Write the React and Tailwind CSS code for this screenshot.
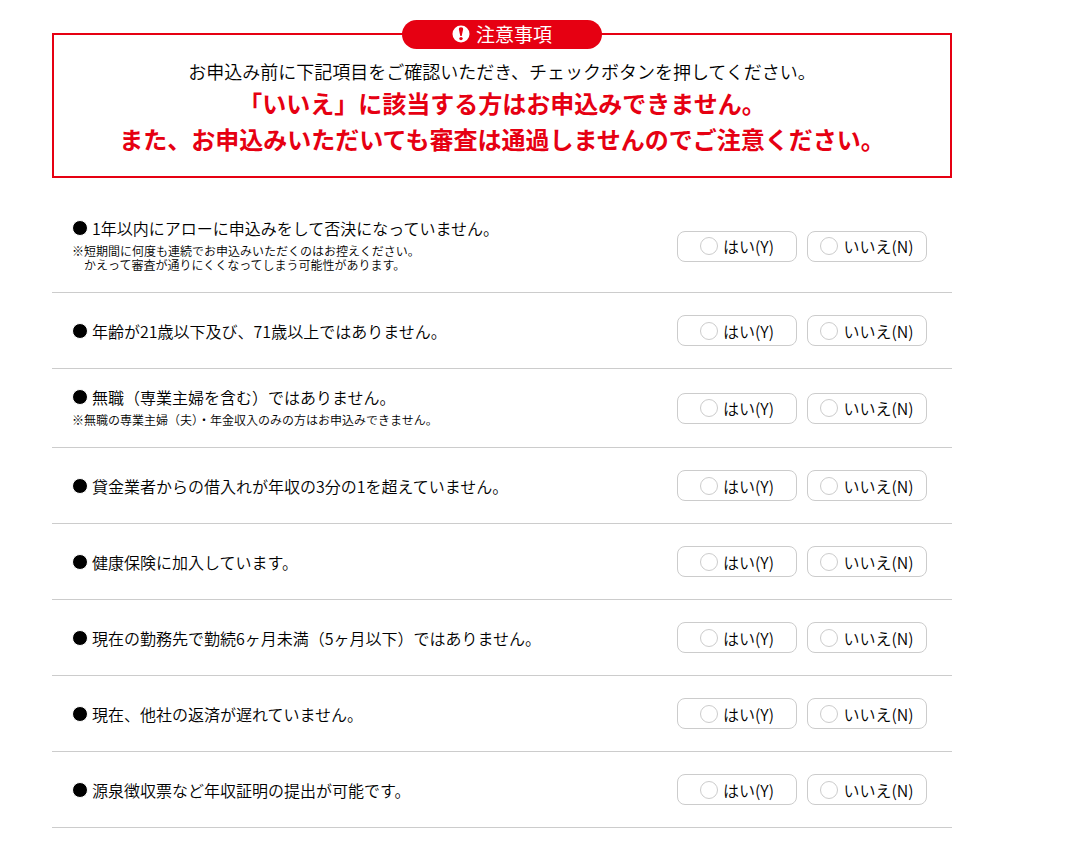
import React, { useState } from "react";

const questions = [
  {
    id: "history",
    text: "1年以内にアローに申込みをして否決になっていません。",
    note: "※短期間に何度も連続でお申込みいただくのはお控えください。\n　かえって審査が通りにくくなってしまう可能性があります。",
  },
  { id: "age", text: "年齢が21歳以下及び、71歳以上ではありません。" },
  {
    id: "job",
    text: "無職（専業主婦を含む）ではありません。",
    note: "※無職の専業主婦（夫）・年金収入のみの方はお申込みできません。",
  },
  {
    id: "loans",
    text: "貸金業者からの借入れが年収の3分の1を超えていません。",
  },
  { id: "insurance", text: "健康保険に加入しています。" },
  {
    id: "tenure",
    text: "現在の勤務先で勤続6ヶ月未満（5ヶ月以下）ではありません。",
  },
  { id: "arrears", text: "現在、他社の返済が遅れていません。" },
  { id: "income", text: "源泉徴収票など年収証明の提出が可能です。" },
];

const App = () => {
  const [answers, setAnswers] = useState({});

  const handleChange = (id, value) => {
    setAnswers((prev) => ({ ...prev, [id]: value }));
  };

  return (
    <main
      lang="ja"
      className="min-h-screen bg-white pt-5 pl-[52px] pr-5 font-['Noto_Sans_CJK_JP',sans-serif] text-base font-[350] text-black"
    >
      <div className="max-w-[900px]">
        <Notice />
        <form className="mt-[22px]">
          {questions.map((question) => (
            <Question
              key={question.id}
              question={question}
              answer={answers[question.id]}
              onChange={handleChange}
            />
          ))}
        </form>
      </div>
    </main>
  );
};

const Notice = () => (
  <section className="relative mt-[13px] border-2 border-[#e60012] px-4 pt-[23px] pb-[19px] text-center">
    {/* Title pill on the top border */}
    <h2 className="absolute inset-x-0 -top-[15px] mx-auto flex h-[29px] w-[200px] items-center justify-center gap-[6px] rounded-full bg-[#e60012] text-[19px] font-normal text-white">
      <AlertIcon />
      注意事項
    </h2>
    <p className="text-[18px] leading-[27px]">
      お申込み前に下記項目をご確認いただき、チェックボタンを押してください。
    </p>
    <p className="text-2xl leading-9 font-bold text-[#e60012]">
      「いいえ」に該当する方はお申込みできません。
      <br />
      また、お申込みいただいても審査は通過しませんのでご注意ください。
    </p>
  </section>
);

const AlertIcon = () => (
  <svg width="18" height="20" viewBox="0 0 18 20" aria-hidden="true">
    <circle cx="9" cy="9" r="8.5" fill="#fff" />
    <path
      d="M9 2.2c-1.5 0-2.3.9-2.1 2.2l1.4 6.7h1.4l1.4-6.7C11.3 3.1 10.5 2.2 9 2.2z"
      fill="#e60012"
    />
    <circle cx="9" cy="13.6" r="1.7" fill="#e60012" />
  </svg>
);

const Question = ({ question, answer, onChange }) => (
  <fieldset
    aria-labelledby={question.id}
    className={`flex items-center justify-between gap-4 border-b border-[#ccc] pr-[25px] pl-5 ${
      question.note ? "" : "py-[22px]"
    }`}
  >
    <div className={question.note ? "pt-4 pb-5" : ""}>
      <p id={question.id} className="flex gap-1 leading-6">
        <Bullet />
        {question.text}
      </p>
      {question.note && (
        <p className="mt-1 text-xs leading-[14px] whitespace-pre-line">
          {question.note}
        </p>
      )}
    </div>
    <div className="flex shrink-0 gap-[10px]">
      <Choice
        name={question.id}
        label="はい(Y)"
        checked={answer === "yes"}
        onChange={() => onChange(question.id, "yes")}
      />
      <Choice
        name={question.id}
        label="いいえ(N)"
        checked={answer === "no"}
        onChange={() => onChange(question.id, "no")}
      />
    </div>
  </fieldset>
);

const Bullet = () => (
  <span
    aria-hidden="true"
    className="mt-1 size-4 shrink-0 rounded-full border border-white bg-black"
  />
);

const Choice = ({ name, label, checked, onChange }) => (
  <label className="flex h-[31px] w-[120px] cursor-pointer items-center justify-center gap-[5px] rounded-lg border border-[#ccc] bg-white">
    <input
      type="radio"
      name={name}
      checked={checked}
      onChange={onChange}
      className="size-[18px] appearance-none rounded-full border border-[#ccc] bg-white checked:border-[5px] checked:border-[#e60012]"
    />
    {label}
  </label>
);

export default App;
